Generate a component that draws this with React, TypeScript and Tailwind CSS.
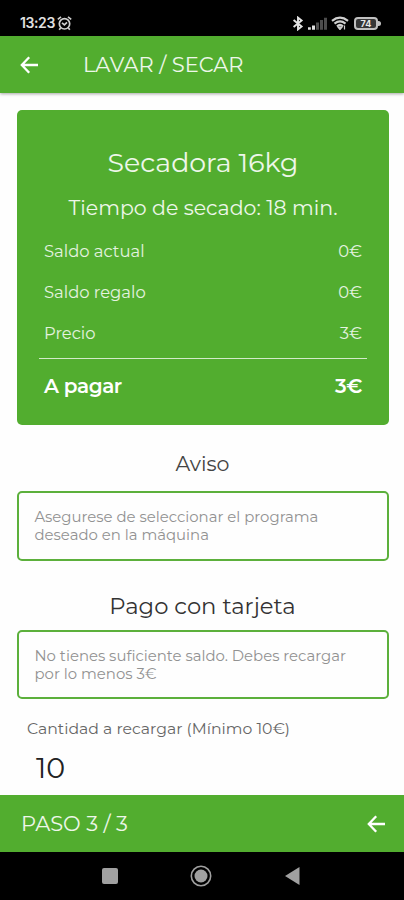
import React from 'react';

interface BalanceRowProps {
  label: string;
  amount: string;
}

const BalanceRow: React.FC<BalanceRowProps> = ({ label, amount }) => {
  return (
    <div className="flex h-[41px] items-center justify-between px-[27px] text-[16.4px] text-white/85">
      <span>{label}</span>
      <span>{amount}</span>
    </div>
  );
};

const BackArrow: React.FC = () => {
  return (
    <svg className="h-[18px] w-[18px]" viewBox="0 0 18 18" fill="none" stroke="#fff" strokeWidth="2.3">
      <path d="M9.2 1.2 1.8 9l7.4 7.8M1.8 9H18" />
    </svg>
  );
};

const StatusBar: React.FC = () => {
  return (
    <div className="flex h-9 shrink-0 items-center justify-between bg-black pl-[20px] pr-[23px] pt-[10px]">
      <div className="flex items-center gap-[2px]">
        <span className="w-[35px] whitespace-nowrap font-['Inter',sans-serif] text-[14px] font-semibold leading-none tracking-[-0.4px] text-[#e0e0e0]">
          13:23
        </span>
        {/* Alarm clock */}
        <svg className="h-[15px] w-[15px]" viewBox="0 0 15 15" fill="none" stroke="#d0d0d0" strokeWidth="1.7">
          <circle cx="7.5" cy="7.8" r="5.2" />
          <path d="M.8 3.4 4 .9M14.2 3.4 11 .9M5 6.8l2.4 2L10 6.4M3.6 12 2.2 13.8M11.4 12l1.4 1.8" />
        </svg>
      </div>
      <div className="flex items-center">
        {/* Bluetooth */}
        <svg className="mr-[4px] h-[15px] w-[12px]" viewBox="0 0 12 15" fill="none" stroke="#e4e4e4" strokeWidth="1.9">
          <path d="M1.6 4 9.6 10.6 6 13.4V1.6l3.6 2.8L1.6 11" />
        </svg>
        {/* Signal strength */}
        <svg className="mr-[4px] h-[13px] w-[19px]" viewBox="0 0 19 13">
          <path d="M0 10.3h2.8v2.5H0zM4 8.5h3v4.3H4z" fill="#e0e0e0" />
          <path d="M8 5.5h3v7.3H8zM12 3h3v9.8h-3zM16 .8h3v12h-3z" fill="#4c4c4c" />
        </svg>
        {/* Wifi */}
        <svg className="mr-[5px] h-[14px] w-[18px]" viewBox="0 0 18 14" fill="none" stroke="#d0d0d0" strokeWidth="2.2">
          <path d="M1 4.8Q9-1.5 17 4.8M3.5 7.6Q9 3.2 14.5 7.6M6 10.3Q9 7.7 12 10.3" />
          <path d="M7 11.2h4L9 13.6zM13.5 9.5v4" fill="#d0d0d0" strokeWidth="1.2" />
        </svg>
        {/* Battery */}
        <div className="flex h-[13px] w-[24px] items-center justify-center rounded-[4px] border-2 border-[#c0c0c0] bg-[#363636] font-['Inter',sans-serif] text-[9px] font-bold leading-none text-[#e8e8e8]">
          74
        </div>
        <div className="h-[5px] w-[3px] rounded-r-sm bg-[#c0c0c0]" />
      </div>
    </div>
  );
};

const NoticeBox: React.FC<{ children: React.ReactNode }> = ({ children }) => {
  return (
    <div className="ml-[17px] mr-[15px] flex items-center rounded-[5px] border-2 border-[#5cb03c] pl-[15.5px] text-[14.9px] leading-[18px] text-[#929292]">
      {children}
    </div>
  );
};

export default function App() {
  return (
    <div className="flex h-[900px] w-[404px] flex-col overflow-hidden bg-[#fefefe] font-['Montserrat','Inter',sans-serif]">
      <StatusBar />

      <header className="flex h-[57px] shrink-0 items-center bg-[#52ad2f] pl-[20px] text-white shadow-[0_1px_3px_rgba(0,0,0,0.35)]">
        <BackArrow />
        <h1 className="ml-[45px] text-[21px] text-white/90">LAVAR / SECAR</h1>
      </header>

      <main className="flex min-h-0 flex-1 flex-col pt-[17px]">
        {/* Summary card */}
        <section className="ml-[17px] mr-[15px] flex h-[315px] shrink-0 flex-col rounded-[5px] bg-[#52ad2f] text-white">
          <h2 className="mt-[33px] text-center text-[26.8px] leading-[40px] text-white/90">Secadora 16kg</h2>
          <p className="mt-[10px] text-center text-[20.5px] leading-[30px] text-white/90">Tiempo de secado: 18 min.</p>
          <div className="mt-[8px]">
            <BalanceRow label="Saldo actual" amount="0€" />
            <BalanceRow label="Saldo regalo" amount="0€" />
            <BalanceRow label="Precio" amount="3€" />
          </div>
          <div className="mx-[22px] mt-[4px] h-px bg-white/75" />
          <div className="mt-[12px] flex items-center justify-between px-[27px] text-[20px] font-semibold leading-[30px]">
            <span className="tracking-[-0.4px]">A pagar</span>
            <span className="tracking-[-0.3px]">3€</span>
          </div>
        </section>

        <h3 className="mt-[23px] pl-px text-center text-[20.6px] leading-[32px] text-[#444]">Aviso</h3>
        <div className="mt-[11px] grid h-[70px] shrink-0">
          <NoticeBox>
            <p>
              Asegurese de seleccionar el programa
              <br />
              deseado en la máquina
            </p>
          </NoticeBox>
        </div>

        <h3 className="mt-[29px] pl-px text-center text-[22.7px] leading-[32px] text-[#333]">Pago con tarjeta</h3>
        <div className="mt-[8px] grid h-[69px] shrink-0">
          <NoticeBox>
            <p>
              No tienes suficiente saldo. Debes recargar
              <br />
              por lo menos 3€
            </p>
          </NoticeBox>
        </div>

        <label className="ml-[27px] mt-[20px] text-[15.7px] leading-[20px] text-[#666]">
          Cantidad a recargar (Mínimo 10€)
        </label>
        <span className="ml-[36px] mt-[11px] text-[28.5px] leading-[36px] text-[#222]">10</span>
      </main>

      <footer className="flex h-[57px] shrink-0 items-center justify-between bg-[#52ad2f] pl-[21px] pr-[19px]">
        <span className="text-[21px] text-white/90">PASO 3 / 3</span>
        <BackArrow />
      </footer>

      {/* Android navigation */}
      <nav className="flex h-12 shrink-0 items-center bg-black pl-[102px]">
        <div className="h-[16px] w-[16px] rounded-[2px] bg-[#a0a0a0]" />
        <svg className="ml-[72px] h-[22px] w-[22px]" viewBox="0 0 22 22">
          <circle cx="11" cy="11" r="9.7" fill="none" stroke="#a0a0a0" strokeWidth="1.6" />
          <circle cx="11" cy="11" r="6.5" fill="#a0a0a0" />
        </svg>
        <svg className="ml-[73px] h-[18px] w-[15px]" viewBox="0 0 15 18">
          <path d="M0 9 14.5 0v18z" fill="#a0a0a0" />
        </svg>
      </nav>
    </div>
  );
}
